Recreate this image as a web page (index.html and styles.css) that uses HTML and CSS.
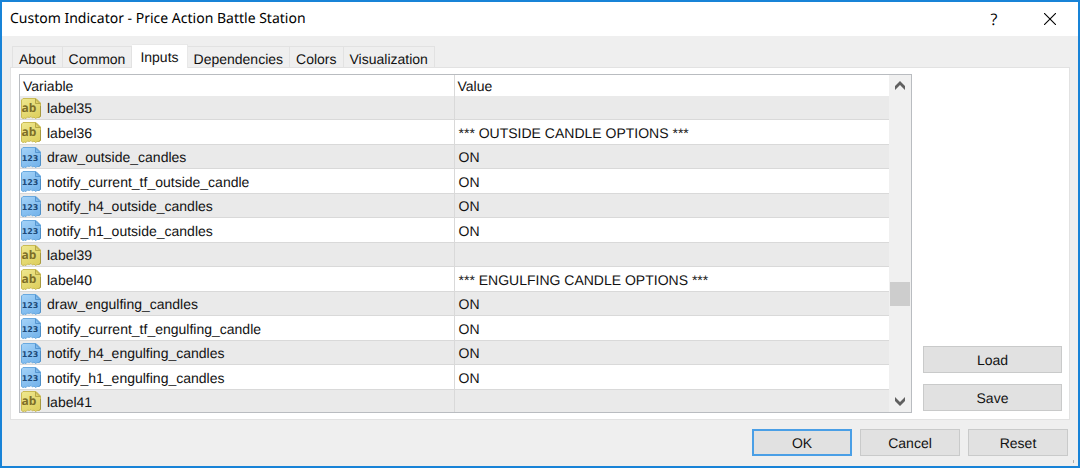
FILE: index.html
```html
<!DOCTYPE html>
<html lang="en">
<head>
<meta charset="utf-8">
<title>Custom Indicator - Price Action Battle Station</title>
<link rel="stylesheet" href="styles.css">
</head>
<body>
<svg class="defs" aria-hidden="true">
  <defs>
    <linearGradient id="gold" x1="0" y1="0" x2="0.6" y2="1">
      <stop offset="0" stop-color="#efe88f"/><stop offset="1" stop-color="#dfd162"/>
    </linearGradient>
    <linearGradient id="sky" x1="0" y1="0" x2="0.6" y2="1">
      <stop offset="0" stop-color="#a5d3f8"/><stop offset="1" stop-color="#78b6ec"/>
    </linearGradient>
    <symbol id="text-type" viewBox="0 0 21 21">
      <path d="M2 .5h13l4.500 4.500v13.500l-1.500 1h-2l-1.500 1-1.500-1.500-1.500 1-1.500-1.500-1.500 1-2-.500-1.500 1.500-1.500-.500-1.500 .500-1.500-1V2z" fill="url(#gold)" stroke="#cabb55"/>
      <path d="M14.500 1v4.500h4.500z" fill="#e0d36a" stroke="#aa9b3c" stroke-width=".8"/>
      <path d="M19.500 8v10l-1.500 1.500" fill="none" stroke="#a89a40"/>
      <text x="8" y="14" class="glyph glyph-text">ab</text>
    </symbol>
    <symbol id="number-type" viewBox="0 0 21 21">
      <path d="M2 .5h13l4.500 4.500v13.500l-1.500 1h-2l-1.500 1-1.500-1.500-1.500 1-1.500-1.500-1.500 1-2-.500-1.500 1.500-1.500-.500-1.500 .500-1.500-1V2z" fill="url(#sky)" stroke="#69a9df"/>
      <path d="M14.500 1v4.500h4.500z" fill="#82bcee" stroke="#4a8cc8" stroke-width=".8"/>
      <path d="M19.500 8v10l-1.500 1.500" fill="none" stroke="#4f8fc6"/>
      <text x="9" y="14" class="glyph glyph-number">123</text>
    </symbol>
  </defs>
</svg>
<div class="dialog">
  <header class="titlebar">
    <h1 class="title">Custom Indicator - Price Action Battle Station</h1>
    <button class="caption" type="button">?</button>
    <button class="caption" type="button" aria-label="Close">
      <svg width="12" height="12" viewBox="0 0 12 12"><path d="M0 0l12 12M12 0L0 12" stroke="#000" stroke-width="1.100"/></svg>
    </button>
  </header>
  <nav class="tabs" role="tablist">
    <button class="tab" type="button" role="tab">About</button>
    <button class="tab" type="button" role="tab">Common</button>
    <button class="tab active" type="button" role="tab" aria-selected="true">Inputs</button>
    <button class="tab" type="button" role="tab">Dependencies</button>
    <button class="tab" type="button" role="tab">Colors</button>
    <button class="tab" type="button" role="tab">Visualization</button>
  </nav>
  <main class="panel">
    <div class="list">
      <div class="view">
      <table class="grid">
        <thead><tr><th>Variable</th><th>Value</th></tr></thead>
        <tbody>
          <tr><td><span class="name"><svg class="icon"><use href="#text-type"/></svg>label35</span></td><td></td></tr>
          <tr><td><span class="name"><svg class="icon"><use href="#text-type"/></svg>label36</span></td><td>*** OUTSIDE CANDLE OPTIONS ***</td></tr>
          <tr><td><span class="name"><svg class="icon"><use href="#number-type"/></svg>draw_outside_candles</span></td><td>ON</td></tr>
          <tr><td><span class="name"><svg class="icon"><use href="#number-type"/></svg>notify_current_tf_outside_candle</span></td><td>ON</td></tr>
          <tr><td><span class="name"><svg class="icon"><use href="#number-type"/></svg>notify_h4_outside_candles</span></td><td>ON</td></tr>
          <tr><td><span class="name"><svg class="icon"><use href="#number-type"/></svg>notify_h1_outside_candles</span></td><td>ON</td></tr>
          <tr><td><span class="name"><svg class="icon"><use href="#text-type"/></svg>label39</span></td><td></td></tr>
          <tr><td><span class="name"><svg class="icon"><use href="#text-type"/></svg>label40</span></td><td>*** ENGULFING CANDLE OPTIONS ***</td></tr>
          <tr><td><span class="name"><svg class="icon"><use href="#number-type"/></svg>draw_engulfing_candles</span></td><td>ON</td></tr>
          <tr><td><span class="name"><svg class="icon"><use href="#number-type"/></svg>notify_current_tf_engulfing_candle</span></td><td>ON</td></tr>
          <tr><td><span class="name"><svg class="icon"><use href="#number-type"/></svg>notify_h4_engulfing_candles</span></td><td>ON</td></tr>
          <tr><td><span class="name"><svg class="icon"><use href="#number-type"/></svg>notify_h1_engulfing_candles</span></td><td>ON</td></tr>
          <tr><td><span class="name"><svg class="icon"><use href="#text-type"/></svg>label41</span></td><td></td></tr>
        </tbody>
      </table>
      </div>
      <div class="scrollbar">
        <button class="arrow" type="button" aria-label="Scroll up"><svg width="10" height="9" viewBox="0 0 10 9"><path d="M5 0l5 5v4L5 4 0 9V5z" fill="#606060"/></svg></button>
        <div class="track"><div class="thumb"></div></div>
        <button class="arrow" type="button" aria-label="Scroll down"><svg width="10" height="9" viewBox="0 0 10 9"><path d="M5 9l5-5V0L5 5 0 0v4z" fill="#606060"/></svg></button>
      </div>
    </div>
    <div class="side">
      <button class="push" type="button">Load</button>
      <button class="push" type="button">Save</button>
    </div>
  </main>
  <footer class="actions">
    <button class="push default" type="button">OK</button>
    <button class="push" type="button">Cancel</button>
    <button class="push" type="button">Reset</button>
    <span class="grip"></span>
  </footer>
</div>
</body>
</html>
```
FILE: styles.css
```css
* { box-sizing: border-box; }
body {
  margin: 0;
  font: 14px/20px "Liberation Sans", Arial, sans-serif;
  text-rendering: geometricPrecision;
  color: #111;
}
button {
  margin: 0;
  padding: 0;
  border: 0;
  background: none;
  font: inherit;
  color: inherit;
  text-rendering: inherit;
}
.defs { position: absolute; width: 0; height: 0; }
.glyph { font-weight: bold; text-anchor: middle; }
.glyph-text { font-size: 12px; font-family: "Open Sans", sans-serif; fill: #7d6e28; }
.glyph-number { font-size: 8px; font-family: "DejaVu Sans", sans-serif; fill: #1d4a78; }

.dialog {
  display: flex;
  flex-direction: column;
  min-height: 100vh;
  border: 2px solid #1883d7;
  background: #efefef;
}
.titlebar {
  display: flex;
  align-items: center;
  height: 34px;
  padding-left: 8px;
  background: #fff;
  color: #000;
}
.title {
  flex: 1;
  margin: 0;
  font: 14px/20px "Noto Sans", "Segoe UI", sans-serif;
}
.caption {
  display: flex;
  align-items: center;
  justify-content: center;
  width: 56px;
  height: 32px;
  font: 16px/20px "Open Sans", "Segoe UI", sans-serif;
}

.tabs {
  display: flex;
  align-items: flex-end;
  height: 31px;
  padding-left: 10px;
}
.tab {
  height: 21px;
  padding: 3px 6px 0;
  border: 1px solid #e2e2e2;
  border-width: 1px 1px 0 0;
  line-height: 18px;
}
.tab:first-child { border-left-width: 1px; }
.tab.active {
  height: 24px;
  margin-bottom: -1px;
  padding: 2px 8px 2px;
  border-color: #e8e8e8;
  background: #fff;
  z-index: 1;
}

.panel {
  display: flex;
  flex: 1;
  gap: 11px;
  margin: 0 8px;
  padding: 6px 7px 6px 8px;
  border: 1px solid #e2e2e2;
  background: #fff;
}
.list {
  display: flex;
  flex: 1;
  border: 1px solid #b9bcc0;
}
.view { flex: 1; }
.grid {
  width: 100%;
  border-collapse: separate;
  border-spacing: 0;
  table-layout: fixed;
}
.grid th, .grid td {
  height: 24px;
  padding: 1px 4px 0;
  border-bottom: 1px solid #d9d9d9;
  text-align: left;
  font-weight: normal;
  line-height: 20px;
}
.grid th { height: 21px; padding: 0 3px; border-bottom: 0; }
.grid th:first-child, .grid td:first-child { width: 50%; border-right: 1px solid #d9d9d9; }
.grid td:first-child { padding-left: 1px; }
.grid tbody tr:nth-child(odd) { background: #eaeaea; }
.grid tbody tr:nth-child(even) td { height: 25px; }
.grid tbody tr:last-child td { height: 22px; border-bottom: 0; }
.name { display: flex; align-items: center; gap: 5px; }
.icon { width: 21px; height: 21px; }

.scrollbar {
  display: flex;
  flex-direction: column;
  width: 22px;
  background: #f0f0f0;
}
.arrow {
  display: flex;
  align-items: center;
  justify-content: center;
  height: 21px;
}
.track { display: flex; flex-direction: column; flex: 1; }
.track::before { content: ""; flex: 185; }
.track::after { content: ""; flex: 85; }
.thumb { height: 24px; margin: 0 1px; background: #cdcdcd; }

.side {
  display: flex;
  flex-direction: column;
  justify-content: flex-end;
  gap: 11px;
  width: 139px;
  padding-bottom: 2px;
}
.push {
  height: 27px;
  border: 1px solid #c9caca;
  background: #e1e1e1;
}
.actions {
  position: relative;
  display: flex;
  justify-content: flex-end;
  gap: 8px;
  padding: 9px 10px 10px;
}
.actions .push { width: 100px; }
.push.default { border: 2px solid #4a9fe6; }
.grip {
  position: absolute;
  right: 4px;
  bottom: 3px;
  width: 1px;
  height: 3px;
  background: #b0b0b0;
}
```
